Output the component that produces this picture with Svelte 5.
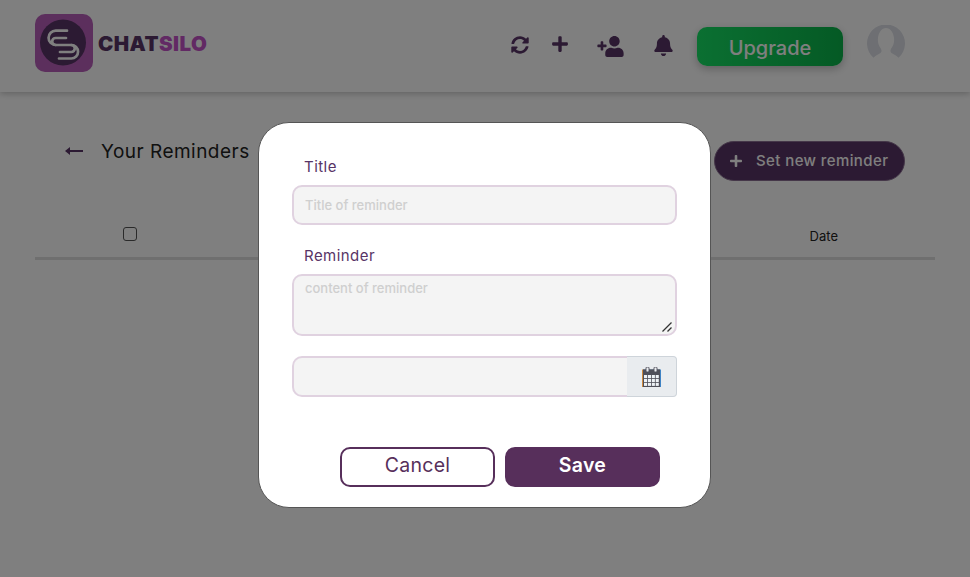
<script>
  const cols = [0, 1, 2, 3];
  const rows = [0, 1, 2];
</script>

<div class="page">
  <header class="topbar">
    <div class="brand">
      <div class="logo-mark">
        <svg viewBox="0 0 58 58" width="58" height="58">
          <circle cx="28" cy="28.500" r="23" fill="#583466" />
          <g fill="none" stroke="#fff" stroke-width="2.700" stroke-linecap="round">
            <path d="M32 16.700H20.700a7.150 7.150 0 0 0 0 14.300H36.300a6.750 6.750 0 0 1 0 13.500H24" />
            <path d="M31 24H20.700a3.500 3.500 0 0 0 0 7" />
            <path d="M25 38H36.300a3.500 3.500 0 0 0 0-7" />
          </g>
        </svg>
      </div>
      <span class="wordmark"><span class="chat">CHAT</span><span class="silo">SILO</span></span>
    </div>
    <nav class="actions">
      <svg class="ic sync" viewBox="0 0 512 512"><path d="M370.72 133.28C339.458 104.008 298.888 87.962 255.848 88c-77.458.068-144.328 53.178-162.791 126.85-1.344 5.363-6.122 9.15-11.651 9.15H24.103c-7.498 0-13.194-6.807-11.807-14.176C33.933 94.924 134.813 8 256 8c66.448 0 126.791 26.136 171.315 68.685L463.03 40.97C478.149 25.851 504 36.559 504 57.941V192c0 13.255-10.745 24-24 24H345.941c-21.382 0-32.09-25.851-16.971-40.971l41.75-41.749zM32 296h134.059c21.382 0 32.09 25.851 16.971 40.971l-41.75 41.75c31.262 29.273 71.835 45.319 114.876 45.28 77.418-.07 144.315-53.144 162.787-126.849 1.344-5.363 6.122-9.15 11.651-9.15h57.304c7.498 0 13.194 6.807 11.807 14.176C478.067 417.076 377.187 504 256 504c-66.448 0-126.791-26.136-171.315-68.685L48.97 471.03C33.851 486.149 8 475.441 8 454.059V320c0-13.255 10.745-24 24-24z"/></svg>
      <svg class="ic plus" viewBox="0 0 448 512"><path d="M416 208H272V64c0-17.67-14.33-32-32-32h-32c-17.67 0-32 14.33-32 32v144H32c-17.67 0-32 14.33-32 32v32c0 17.67 14.33 32 32 32h144v144c0 17.67 14.33 32 32 32h32c17.67 0 32-14.33 32-32V304h144c17.67 0 32-14.33 32-32v-32c0-17.67-14.33-32-32-32z"/></svg>
      <svg class="ic user" viewBox="0 0 640 512"><g transform="translate(640 0) scale(-1 1)"><path d="M624 208h-64v-64c0-8.800-7.200-16-16-16h-32c-8.800 0-16 7.200-16 16v64h-64c-8.800 0-16 7.200-16 16v32c0 8.800 7.200 16 16 16h64v64c0 8.800 7.200 16 16 16h32c8.800 0 16-7.200 16-16v-64h64c8.800 0 16-7.200 16-16v-32c0-8.800-7.200-16-16-16zm-400 48c70.700 0 128-57.300 128-128S294.700 0 224 0 96 57.300 96 128s57.300 128 128 128zm89.600 32h-16.700c-22.200 10.200-46.900 16-72.900 16s-50.600-5.800-72.900-16h-16.700C60.200 288 0 348.200 0 422.400V464c0 26.500 21.500 48 48 48h352c26.500 0 48-21.500 48-48v-41.600c0-74.200-60.200-134.400-134.400-134.400z"/></g></svg>
      <svg class="ic bell" viewBox="0 0 448 512"><path d="M224 512c35.320 0 63.970-28.650 63.970-64H160.030c0 35.350 28.650 64 63.970 64zm215.390-149.710c-19.320-20.760-55.470-51.990-55.470-154.290 0-77.700-54.480-139.900-127.940-155.160V32c0-17.670-14.320-32-31.980-32s-31.980 14.330-31.980 32v20.840C118.560 68.100 64.080 130.300 64.080 208c0 102.300-36.150 133.530-55.470 154.290-6 6.450-8.660 14.160-8.610 21.710.11 16.400 12.980 32 32.100 32h383.800c19.120 0 32-15.600 32.100-32 .05-7.550-2.610-15.270-8.610-21.710z"/></svg>
      <button class="upgrade">Upgrade</button>
      <div class="avatar">
        <svg viewBox="0 0 38 38" width="38" height="38">
          <path d="M6.500 32.800A19 19 0 1 1 31.500 32.800C29.500 30.500 26.500 29.500 24.500 28c-1.500-1.200-1.200-3-.3-4.500C26.500 20.500 27.500 17 27 13 26.300 7.500 23.500 3 19 3s-7.300 4.500-8 10c-.5 4 .5 7.500 2.800 10.500.9 1.500 1.200 3.300-.3 4.500-2 1.500-5 2.500-7 4.800z" fill="#dcdfe6" />
        </svg>
      </div>
    </nav>
  </header>

  <main class="content">
    <div class="title-row">
      <div class="title-left">
        <svg class="back" viewBox="0 0 18 10" width="18" height="10"><path d="M0 5l5-4v3h13v2H5v3z" fill="#583466" /></svg>
        <h1>Your Reminders</h1>
      </div>
      <button class="new-reminder">
        <svg viewBox="0 0 448 512" width="12" height="14"><path fill="#fff" d="M416 208H272V64c0-17.670-14.330-32-32-32h-32c-17.670 0-32 14.330-32 32v144H32c-17.670 0-32 14.330-32 32v32c0 17.670 14.330 32 32 32h144v144c0 17.670 14.330 32 32 32h32c17.670 0 32-14.330 32-32V304h144c17.670 0 32-14.330 32-32v-32c0-17.670-14.330-32-32-32z"/></svg>
        <span>Set new reminder</span>
      </button>
    </div>
    <div class="table-head">
      <span class="check"></span>
      <span class="date">Date</span>
    </div>
  </main>

  <div class="backdrop">
    <section class="modal">
      <div class="field">
        <label for="t">Title</label>
        <input id="t" placeholder="Title of reminder" />
      </div>
      <div class="field second">
        <label for="r">Reminder</label>
        <div class="area-wrap">
          <textarea id="r" placeholder="content of reminder"></textarea>
          <svg class="grip" viewBox="0 0 10 10" width="10" height="10">
            <path d="M0.500 9.500L9.500 0.500M5.500 9.500L9.500 5.500" stroke="#333" stroke-width="1.300" fill="none" />
          </svg>
        </div>
      </div>
      <div class="date-group">
        <input aria-label="date" />
        <span class="addon">
          <svg viewBox="0 0 19 20" width="19" height="20">
            <rect x="0" y="2.500" width="18" height="17.500" fill="#d08a3c" />
            <rect x="1" y="2.500" width="18" height="17.500" fill="#3f83c4" />
            <rect x="1" y="2.500" width="17" height="17.500" fill="#4f4f59" />
            {#each rows as r}
              {#each cols as c}
                <rect x={2 + c * 3.900} y={8 + r * 3.900} width="3.100" height="3.100" fill="#eef2f6" />
              {/each}
            {/each}
            <rect x="4" y="0" width="3" height="5" rx="1" fill="#e9ecef" stroke="#4f4f59" stroke-width="0.900" />
            <rect x="12" y="0" width="3" height="5" rx="1" fill="#e9ecef" stroke="#4f4f59" stroke-width="0.900" />
          </svg>
        </span>
      </div>
      <div class="buttons">
        <button class="cancel">Cancel</button>
        <button class="save">Save</button>
      </div>
    </section>
  </div>
</div>

<style>
  :global(body) {
    margin: 0;
    background: #fff;
    overflow: hidden;
    font-family: Inter, "Liberation Sans", sans-serif;
  }
  .page {
    height: 577px;
    position: relative;
    overflow: hidden;
  }
  .topbar {
    height: 92px;
    box-sizing: border-box;
    display: flex;
    align-items: flex-start;
    justify-content: space-between;
    padding: 14px 65px 0 35px;
    background: #fff;
    box-shadow: 0 2px 6px rgba(0, 0, 0, 0.22);
  }
  .brand {
    display: flex;
    align-items: center;
    gap: 5px;
  }
  .logo-mark {
    width: 58px;
    height: 58px;
    border-radius: 10px;
    background: #b85fba;
  }
  .logo-mark svg {
    display: block;
  }
  .wordmark {
    font-size: 20.500px;
    font-weight: 900;
    letter-spacing: 0.450px;
  }
  .chat {
    color: #583466;
  }
  .silo {
    color: #c453c8;
  }
  .actions {
    display: flex;
    align-items: flex-start;
  }
  .ic {
    fill: #583466;
    display: block;
  }
  .sync {
    width: 18px;
    height: 18px;
    margin-top: 22px;
  }
  .plus {
    width: 16px;
    height: 18px;
    margin: 21px 0 0 23px;
  }
  .user {
    width: 27px;
    height: 21px;
    margin: 22px 0 0 29px;
  }
  .bell {
    width: 19px;
    height: 21px;
    margin: 21px 0 0 30px;
  }
  .upgrade {
    width: 146px;
    height: 39px;
    margin: 13px 0 0 24px;
    border: 0;
    border-radius: 10px;
    background: linear-gradient(90deg, #16e064, #0ab44a);
    color: #fff;
    font: 500 20px Inter, sans-serif;
    padding: 3px 0 0;
    box-shadow: 0 3px 8px rgba(0, 0, 0, 0.25);
  }
  .avatar {
    width: 38px;
    height: 38px;
    margin: 11px 0 0 24px;
  }
  .avatar svg {
    display: block;
  }
  .content {
    padding: 49px 35px 0;
  }
  .title-row {
    display: flex;
    justify-content: space-between;
    align-items: flex-start;
    padding: 0 30px;
  }
  .title-left {
    display: flex;
    align-items: center;
    gap: 18px;
    height: 22px;
    margin-top: -1px;
  }
  h1 {
    margin: 0;
    font-size: 19px;
    font-weight: 400;
    letter-spacing: 0.480px;
    color: #222;
  }
  .new-reminder {
    width: 191px;
    height: 40px;
    box-sizing: border-box;
    border: 1px solid #8a6f92;
    border-radius: 20px;
    background: #583466;
    color: #fff;
    font: 500 15px Inter, sans-serif;
    letter-spacing: 0.400px;
    display: flex;
    align-items: center;
    gap: 14px;
    padding: 0 0 2px 15px;
  }
  .new-reminder svg {
    margin-top: 2px;
  }
  .table-head {
    height: 79px;
    box-sizing: border-box;
    border-bottom: 3px solid #dedede;
    display: flex;
    align-items: center;
    justify-content: space-between;
    padding: 29px 97px 0 88px;
  }
  .check {
    width: 12px;
    height: 12px;
    border: 1.500px solid #555;
    border-radius: 3px;
  }
  .date {
    font-size: 13px;
    color: #222;
    margin-top: 5px;
  }
  .backdrop {
    position: absolute;
    inset: 0;
    background: rgba(0, 0, 0, 0.5);
    display: flex;
    justify-content: center;
    align-items: flex-start;
    padding: 122px 1px 0 0;
    box-sizing: border-box;
  }
  .modal {
    width: 453px;
    height: 386px;
    box-sizing: border-box;
    background: #fff;
    border-radius: 31px;
    border: 1px solid #555;
    padding: 34px 33px 0;
    display: flex;
    flex-direction: column;
  }
  .field {
    display: flex;
    flex-direction: column;
  }
  .second {
    margin-top: 21px;
  }
  label {
    font-size: 15px;
    letter-spacing: 0.450px;
    color: #583466;
    padding-left: 12px;
    height: 20px;
    line-height: 20px;
    margin-bottom: 8px;
  }
  input,
  textarea {
    box-sizing: border-box;
    border: 2px solid #e0d2e0;
    border-radius: 10px;
    background: #f4f4f4;
    padding: 0 11px;
    font: 500 13px Inter, sans-serif;
    outline: none;
  }
  input {
    height: 40px;
    width: 100%;
  }
  .area-wrap {
    position: relative;
  }
  textarea {
    width: 100%;
    height: 62px;
    padding-top: 4px;
    display: block;
    resize: none;
  }
  .grip {
    position: absolute;
    right: 5px;
    bottom: 4px;
  }
  ::placeholder {
    color: #cfcfcf;
    opacity: 1;
  }
  .date-group {
    display: flex;
    height: 41px;
    margin-top: 20px;
  }
  .date-group input {
    flex: 1;
    height: 41px;
    border-radius: 10px 0 0 10px;
    border-right: 0;
  }
  .addon {
    width: 50px;
    box-sizing: border-box;
    background: #e9ecef;
    border: 1px solid #ced4da;
    border-radius: 0 4px 4px 0;
    border-left: 0;
    display: flex;
    align-items: center;
    justify-content: center;
  }
  .buttons {
    display: flex;
    gap: 10px;
    margin-top: 50px;
    padding-left: 48px;
  }
  .buttons button {
    width: 155px;
    height: 40px;
    box-sizing: border-box;
    border-radius: 10px;
    font: 400 19.500px Inter, sans-serif;
    letter-spacing: 0.300px;
    color: #572f5b;
    border: 2px solid #572f5b;
    background: #fff;
    padding: 0 0 4px;
  }
  .buttons .save {
    background: #572f5b;
    color: #fff;
    font-weight: 600;
  }
</style>
